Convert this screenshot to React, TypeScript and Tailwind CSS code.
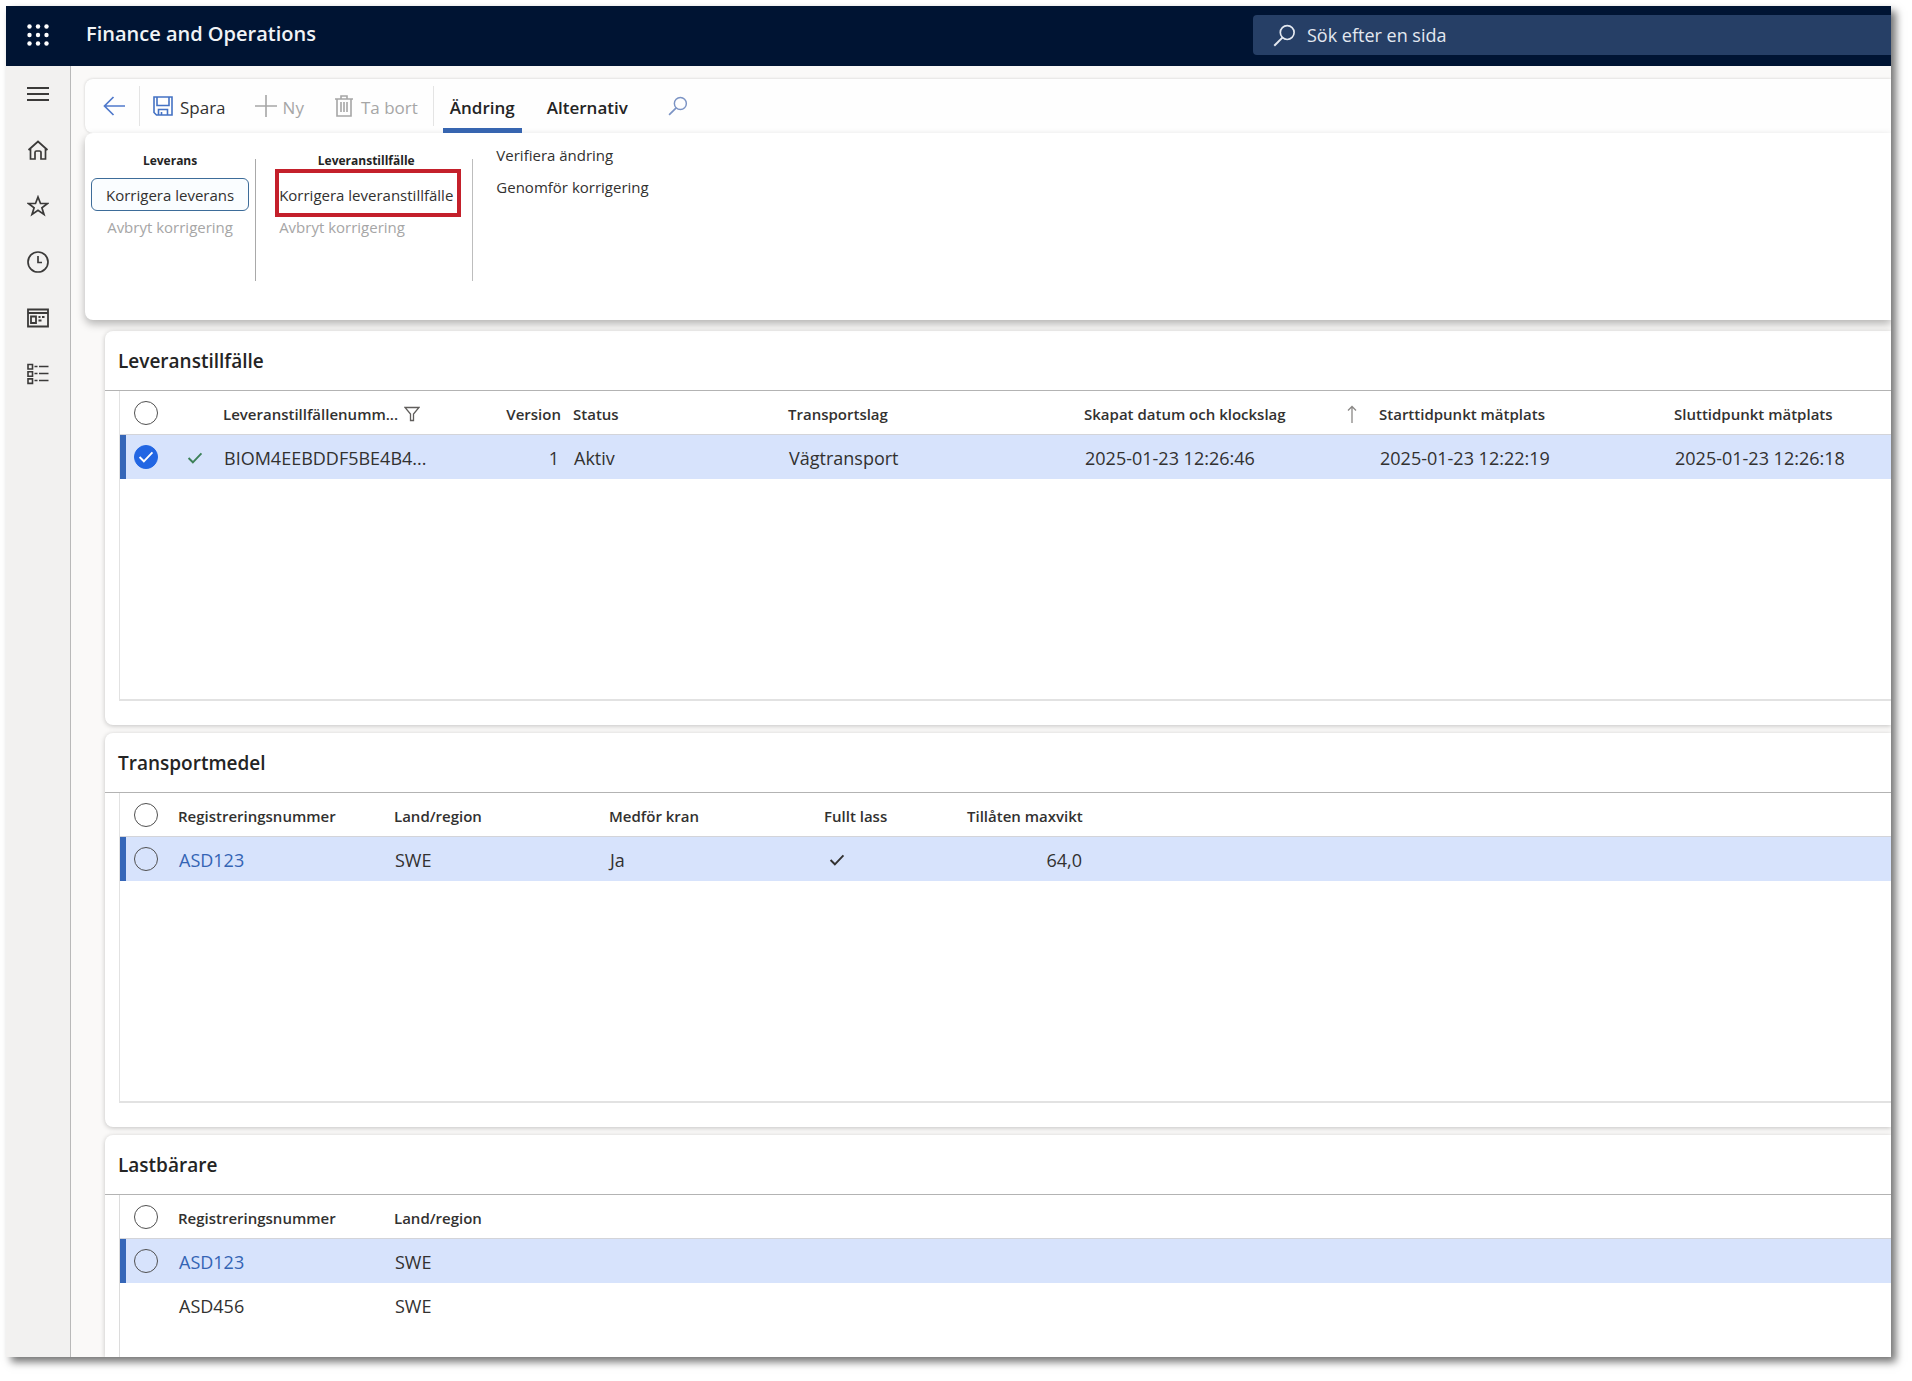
import type { ReactNode } from "react";

function SearchIcon({ className }: { className: string }) {
  return (
    <svg viewBox="0 0 22 22" fill="none" stroke="currentColor" className={className} aria-hidden="true">
      <circle cx="13.6" cy="8.2" r="6.6" strokeWidth="1.6" />
      <path d="M9 13 1.2 20.8" strokeWidth="1.9" />
    </svg>
  );
}

function Launcher() {
  return (
    <svg viewBox="0 0 22 22" fill="#fff" className="size-[22px]" aria-hidden="true">
      {[2.5, 11, 19.5].map((y) =>
        [2.5, 11, 19.5].map((x) => <circle key={`${x}-${y}`} cx={x} cy={y} r="2.2" />),
      )}
    </svg>
  );
}

const navIcons: { label: string; icon: ReactNode }[] = [
  { label: "Meny", icon: <path d="M0 5h22M0 11h22M0 17h22" strokeWidth="1.8" /> },
  { label: "Start", icon: <path d="M1.500 11 11 2.500l9.500 8.500M3.500 9.500V20h4.500v-6.500a1.500 1.500 0 0 1 1.500-1.500h3a1.500 1.500 0 0 1 1.500 1.500V20h4.500V9.500" strokeWidth="1.7" /> },
  { label: "Favoriter", icon: <path d="m11 2 2.500 6.500h7l-5.600 4.200 2.100 6.800-6-4.200-6 4.200 2.100-6.800L1.500 8.500h7z" strokeWidth="1.7" /> },
  { label: "Senaste", icon: <path d="M11 1a10 10 0 1 1 0 20 10 10 0 0 1 0-20M11 5v6.500h4" strokeWidth="1.7" /> },
  {
    label: "Arbetsytor",
    icon: <path d="M1 2.500h20v17H1zM1 6h20M4 9.500h5v6.500H4zM11.500 10h2M15 10h2.500M11.500 13.500h3" strokeWidth="1.8" />,
  },
  {
    label: "Moduler",
    icon: (
      <path d="M1 1.500h4.500v4.500H1zM1 8.700h4.500v4.500H1zM1 15.900h4.500v4.500H1zM7.500 3.500h3M12 3.500h9.500M7.500 10.500h3M12 10.500h9.500M7.500 17.500h3M12 17.500h9.500" strokeWidth="1.6" />
    ),
  },
];

function Check({ className }: { className: string }) {
  return (
    <svg viewBox="0 0 18 14" fill="none" stroke="currentColor" strokeWidth="2.2" className={className} aria-hidden="true">
      <path d="m1.500 7 5 5L16.500 1.500" />
    </svg>
  );
}

function SelectCircle({ label, checked = false }: { label: string; checked?: boolean }) {
  return (
    <span className="relative ml-auto block size-6">
      <input
        type="checkbox"
        aria-label={label}
        defaultChecked={checked}
        className="peer block size-6 appearance-none rounded-full border border-[#505050] checked:border-[#2266e3] checked:bg-[#2266e3]"
      />
      <Check className="pointer-events-none absolute top-[6px] left-[4px] hidden h-3 w-4 text-white peer-checked:block" />
    </span>
  );
}

function SelectCell({ label, checked }: { label: string; checked?: boolean }) {
  return (
    <td className="border-l-6 border-[#3566b8] pr-2.5 pl-0">
      <SelectCircle label={label} checked={checked} />
    </td>
  );
}

function Grid({ widths, head, children }: { widths: string[]; head: ReactNode; children: ReactNode }) {
  return (
    <table className="w-full table-fixed border-separate border-spacing-0 text-left text-[#323130] [&_td+td]:pt-0.5 [&_td+td]:pl-[11px] [&_th+th]:pt-0.5 [&_th+th]:pl-2.5">
      <colgroup>
        {widths.map((w, i) => (
          <col key={i} className={w} />
        ))}
        <col />
      </colgroup>
      <thead className="text-[15px] leading-5 whitespace-nowrap">
        <tr className="h-[44px] [&>th]:border-b [&>th]:border-[#d3d4d9] [&>th]:font-semibold">{head}</tr>
      </thead>
      <tbody className="text-lg leading-6 whitespace-nowrap">{children}</tbody>
    </table>
  );
}

function SelectAll() {
  return (
    <th scope="col" className="pr-2.5">
      <SelectCircle label="Markera alla" />
    </th>
  );
}

function Card({ title, last = false, children }: { title: string; last?: boolean; children: ReactNode }) {
  return (
    <section
      className={
        last
          ? "flex grow flex-col rounded-tl-lg bg-white shadow-[0_1px_5px_rgba(0,0,0,0.22)]"
          : "rounded-l-lg bg-white pb-6 shadow-[0_1px_5px_rgba(0,0,0,0.22)]"
      }
    >
      <h2 className="flex h-[60px] items-center border-b border-[#b3b3b3] pt-0.5 pl-[13px] text-[19px] font-semibold text-[#242424]">{title}</h2>
      <div className={last ? "ml-3.5 min-h-[162px] grow border-l border-[#dcdcdc]" : "ml-3.5 min-h-[310px] border-b-2 border-l border-[#e2e2e2]"}>
        {children}
      </div>
    </section>
  );
}

const vehicleCols = ["w-12", "w-[216px]", "w-[215px]", "w-[215px]", "w-[143px]", "w-[129px]"];
const rowSelected = "h-11 bg-[#d7e3fc]";

export default function App() {
  return (
    <div className="flex min-h-screen flex-col bg-white pt-1.5 pr-[21px] pb-6 pl-1.5 font-['Open_Sans','Noto_Sans',sans-serif]">
      <div className="flex grow flex-col overflow-hidden bg-[#faf9f8] shadow-[5px_5px_8px_rgba(0,0,0,0.55)]">
        <header className="flex h-[60px] shrink-0 items-center bg-[#001433] text-white">
          <button type="button" aria-label="Appstartaren" className="mb-0.5 ml-[21px]">
            <Launcher />
          </button>
          <h1 className="mb-1 ml-[37px] text-xl font-semibold text-[#f1f3f6]">Finance and Operations</h1>
          <label className="mb-0.5 ml-auto flex h-10 w-[638px] items-center rounded-l bg-[#263f66] pl-5 text-[#e3e8f0]">
            <SearchIcon className="size-[23px] shrink-0" />
            <input
              type="search"
              aria-label="Sök efter en sida"
              placeholder="Sök efter en sida"
              className="ml-[11px] min-w-0 grow bg-transparent text-lg outline-none placeholder:text-[#e3e8f0]"
            />
          </label>
        </header>

        <div className="flex grow">
          <nav className="flex w-[65px] shrink-0 flex-col border-r border-[#b9b9b9] bg-[#f2f1f0]">
            {navIcons.map((n) => (
              <button key={n.label} type="button" aria-label={n.label} className="flex h-14 items-center justify-center text-[#3b3a39]">
                <svg viewBox="0 0 22 22" fill="none" stroke="currentColor" className="size-[22px]" aria-hidden="true">
                  {n.icon}
                </svg>
              </button>
            ))}
          </nav>

          <main className="flex min-w-0 grow flex-col">
            <div className="relative z-10 mt-[13px] ml-3.5">
              <div className="flex h-[54px] items-center rounded-l-lg bg-[#fefefe] pl-[18px] text-[17px] text-[#323130] shadow-[0_0_3px_rgba(0,0,0,0.18)]">
                <button type="button" aria-label="Tillbaka" className="mr-3.5 text-[#5079cb]">
                  <svg viewBox="0 0 22 20" fill="none" stroke="currentColor" strokeWidth="1.7" className="h-5 w-[22px]" aria-hidden="true">
                    <path d="M22 10H1.500M10.500 1 1.500 10l9 9" />
                  </svg>
                </button>
                <span className="h-10 w-px bg-[#e4e4e4]" />
                <button type="button" className="ml-[13px] flex items-center gap-[7px]">
                  <svg viewBox="0 0 20 20" fill="none" stroke="currentColor" strokeWidth="1.6" className="size-5 text-[#4472c4]" aria-hidden="true">
                    <path d="M1 1h18v18H3.500L1 16.500zM4 1v8.500h12V1M5.500 19v-5.500h9V19M8.500 16v3" />
                  </svg>
                  <span className="pt-[3px]">Spara</span>
                </button>
                <button type="button" disabled className="ml-[29px] flex items-center gap-1.5 text-[#a6a6a6]">
                  <svg viewBox="0 0 22 22" fill="none" stroke="currentColor" strokeWidth="1.6" className="size-[22px]" aria-hidden="true">
                    <path d="M0 11h22M11 0v22" />
                  </svg>
                  <span className="pt-[3px]">Ny</span>
                </button>
                <button type="button" disabled className="ml-[31px] flex items-center gap-2 text-[#a6a6a6]">
                  <svg viewBox="0 0 18 22" fill="none" stroke="currentColor" strokeWidth="1.6" className="h-[22px] w-[18px]" aria-hidden="true">
                    <path d="M0 4h18M2 4v17h14V4M6 4V1h6v3M6 7v10M9 7v10M12 7v10" />
                  </svg>
                  <span className="pt-[3px]">Ta bort</span>
                </button>
                <span className="ml-[15px] h-10 w-px bg-[#e4e4e4]" />
                <div role="tablist" className="ml-[9px] flex self-stretch font-semibold text-[#242424]">
                  <button type="button" role="tab" aria-selected="true" className="w-[79px] border-b-5 border-[#3765b0] pt-2">
                    Ändring
                  </button>
                  <button type="button" role="tab" aria-selected="false" className="ml-[25px] border-b-5 border-transparent pt-2">
                    Alternativ
                  </button>
                </div>
                <button type="button" aria-label="Sök" className="ml-10 text-[#7b93c4]">
                  <SearchIcon className="size-5" />
                </button>
              </div>

              <div className="flex h-[187px] rounded-l-lg bg-white pt-1.5 pl-1.5 text-[15px] leading-5 text-[#323130] shadow-[0_4px_8px_rgba(0,0,0,0.28)]">
                <div className="flex flex-col items-center pt-3">
                  <h3 className="mb-[7px] text-xs leading-5 font-bold text-[#242424]">Leverans</h3>
                  <button type="button" className="h-[33px] rounded-md border border-[#3d6c99] bg-[#fafdff] px-3.5">
                    Korrigera leverans
                  </button>
                  <button type="button" disabled className="h-8 text-[#a6a6a6]">
                    Avbryt korrigering
                  </button>
                </div>
                <span className="mt-5 ml-1.5 h-[122px] w-px bg-[#a9a9a9]" />
                <div className="ml-[23px] flex flex-col items-start pt-3">
                  <h3 className="mb-[7px] self-center text-xs leading-5 font-bold text-[#242424]">Leveranstillfälle</h3>
                  <button type="button" className="relative h-[33px]">
                    Korrigera leveranstillfälle
                    <span className="absolute -top-[9px] -right-2 -bottom-1.5 -left-1 border-4 border-[#c4202b]" />
                  </button>
                  <button type="button" disabled className="h-8 text-[#a6a6a6]">
                    Avbryt korrigering
                  </button>
                </div>
                <span className="mt-5 ml-[19px] h-[122px] w-px bg-[#bdbdbd]" />
                <div className="ml-[23px] flex flex-col items-start">
                  <button type="button" className="h-8">
                    Verifiera ändring
                  </button>
                  <button type="button" className="h-8">
                    Genomför korrigering
                  </button>
                </div>
              </div>
            </div>

            <div className="mt-[11px] ml-[34px] flex grow flex-col gap-2">
              <Card title="Leveranstillfälle">
                <Grid
                  widths={["w-12", "w-[45px]", "w-[235px]", "w-[115px]", "w-[215px]", "w-[296px]", "w-[295px]", "w-[295px]"]}
                  head={
                    <>
                      <SelectAll />
                      <th />
                      <th scope="col">
                        <span className="flex items-center gap-1.5">
                          Leveranstillfällenumm...
                          <svg viewBox="0 0 16 16" fill="none" stroke="#605e5c" strokeWidth="1.3" className="size-4" aria-hidden="true">
                            <path d="M1 1.500h14L9.500 8v6.500h-3V8z" />
                          </svg>
                        </span>
                      </th>
                      <th scope="col" className="pr-0.5 text-right">Version</th>
                      <th scope="col">Status</th>
                      <th scope="col">Transportslag</th>
                      <th scope="col">
                        <span className="flex items-center justify-between pr-3">
                          Skapat datum och klockslag
                          <svg viewBox="0 0 10 18" fill="none" stroke="#8a8886" strokeWidth="1.3" className="h-[18px] w-2.5" aria-hidden="true">
                            <path d="M5 18V1.500M1 5.500l4-4 4 4" />
                          </svg>
                        </span>
                      </th>
                      <th scope="col">Starttidpunkt mätplats</th>
                      <th scope="col">Sluttidpunkt mätplats</th>
                    </>
                  }
                >
                  <tr className={rowSelected}>
                    <SelectCell label="Markera rad" checked />
                    <td>
                      <Check className="ml-2 h-3 w-4 text-[#3c8158]" />
                    </td>
                    <td>BIOM4EEBDDF5BE4B4...</td>
                    <td className="pr-1 text-right">1</td>
                    <td>Aktiv</td>
                    <td>Vägtransport</td>
                    <td>2025-01-23 12:26:46</td>
                    <td>2025-01-23 12:22:19</td>
                    <td>2025-01-23 12:26:18</td>
                  </tr>
                </Grid>
              </Card>

              <Card title="Transportmedel">
                <Grid
                  widths={vehicleCols}
                  head={
                    <>
                      <SelectAll />
                      <th scope="col">Registreringsnummer</th>
                      <th scope="col">Land/region</th>
                      <th scope="col">Medför kran</th>
                      <th scope="col">Fullt lass</th>
                      <th scope="col" className="pr-1 text-right">Tillåten maxvikt</th>
                      <th />
                    </>
                  }
                >
                  <tr className={rowSelected}>
                    <SelectCell label="Markera ASD123" />
                    <td>
                      <a href="#transportmedel-asd123" className="text-[#3464b4]">ASD123</a>
                    </td>
                    <td>SWE</td>
                    <td>Ja</td>
                    <td>
                      <Check className="ml-1 h-3 w-4" />
                    </td>
                    <td className="pr-1 text-right">64,0</td>
                    <td />
                  </tr>
                </Grid>
              </Card>

              <Card title="Lastbärare" last>
                <Grid
                  widths={["w-12", "w-[216px]", "w-[215px]"]}
                  head={
                    <>
                      <SelectAll />
                      <th scope="col">Registreringsnummer</th>
                      <th scope="col">Land/region</th>
                      <th />
                    </>
                  }
                >
                  <tr className={rowSelected}>
                    <SelectCell label="Markera ASD123" />
                    <td>
                      <a href="#lastbarare-asd123" className="text-[#3464b4]">ASD123</a>
                    </td>
                    <td>SWE</td>
                    <td />
                  </tr>
                  <tr className="h-11">
                    <td />
                    <td>ASD456</td>
                    <td>SWE</td>
                    <td />
                  </tr>
                </Grid>
              </Card>
            </div>
          </main>
        </div>
      </div>
    </div>
  );
}
